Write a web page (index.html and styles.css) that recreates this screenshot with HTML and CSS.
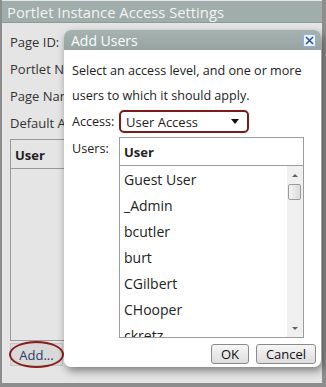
FILE: index.html
```html
<!DOCTYPE html>
<html>

<head>
    <title>Portlet Instance Access Settings</title>
    <link rel="stylesheet" href="styles.css">
</head>

<body>
    <div class="win">
        <div class="win-title">Portlet Instance Access Settings</div>
        <div class="win-body">
            <div class="field">Page ID:</div>
            <div class="field">Portlet Name:</div>
            <div class="field">Page Name:</div>
            <div class="field">Default Access:</div>

            <div class="grid">
                <div class="grid-head">User</div>
            </div>

            <div class="add-wrap">
                <button class="add-btn">Add...</button>
                <span class="ring"></span>
            </div>
        </div>

        <div class="dialog">
            <div class="dialog-title">
                <span>Add Users</span>
                <span class="close-btn">
                    <svg width="9" height="9" viewBox="0 0 9 9">
                        <path d="M1 1 L8 8 M8 1 L1 8" stroke="#2a4f9a" stroke-width="1.5" />
                    </svg>
                </span>
            </div>
            <div class="dialog-body">
                <p class="intro">Select an access level, and one or more users to which it should apply.</p>

                <div class="row">
                    <label class="row-label">Access:</label>
                    <div class="select">
                        <span>User Access</span>
                        <span class="caret"></span>
                    </div>
                </div>

                <div class="row users-row">
                    <label class="row-label">Users:</label>
                    <div class="listbox">
                        <div class="list-head">User</div>
                        <div class="list-wrap">
                            <div class="list-items">
                                <div class="item">Guest User</div>
                                <div class="item">_Admin</div>
                                <div class="item">bcutler</div>
                                <div class="item">burt</div>
                                <div class="item">CGilbert</div>
                                <div class="item">CHooper</div>
                                <div class="item">ckretz</div>
                            </div>
                            <div class="scrollbar">
                                <span class="arrow-up"></span>
                                <span class="thumb"></span>
                                <span class="arrow-down"></span>
                            </div>
                        </div>
                    </div>
                </div>

                <div class="buttons">
                    <button class="btn ok">OK</button>
                    <button class="btn">Cancel</button>
                </div>
            </div>
        </div>
    </div>
</body>

</html>
```

FILE: styles.css
```css
body {
    margin: 0;
    font-family: "Open Sans", "DejaVu Sans", sans-serif;
    font-size: 13px;
    color: #1a1a1a;
}

.win {
    position: relative;
    width: 326px;
    height: 387px;
    box-sizing: border-box;
    background-color: #e5e5e5;
    border-left: 2px solid #8d8d8d;
    border-right: 4px solid #8d8d8d;
    border-bottom: 4px solid #8d8d8d;
    display: flex;
    flex-direction: column;
}

.win-title {
    height: 21px;
    margin-top: 1px;
    padding-left: 5px;
    line-height: 22px;
    font-size: 14.8px;
    color: #f2f4f3;
    background-color: #a1adaa;
    border-bottom: 1px solid #8e9a97;
}

.win-body {
    padding: 6px 0 0 8px;
    color: #333;
}

.field {
    width: 54px;
    height: 27px;
    line-height: 27px;
    white-space: nowrap;
    overflow: hidden;
}

.grid {
    width: 80px;
    height: 202px;
    margin-top: 2px;
    margin-left: 0;
    border: 1px solid #9a9a9a;
    box-sizing: border-box;
}

.grid-head {
    height: 28px;
    line-height: 30px;
    padding-left: 4px;
    font-weight: bold;
    color: #222;
    border-bottom: 1px solid #9a9a9a;
}

.add-wrap {
    position: relative;
    margin-top: 2px;
    margin-left: 0;
    width: 53px;
    height: 23px;
}

.add-btn {
    width: 53px;
    height: 23px;
    padding: 0;
    font-family: inherit;
    font-size: 13px;
    color: #2a3a66;
    background-color: #d9d9d9;
    border: 1px solid #c6c6c6;
}

.ring {
    position: absolute;
    left: -1px;
    top: -2px;
    width: 51px;
    height: 23px;
    border: 2px solid #8b1c1c;
    border-radius: 50%;
}

.dialog {
    position: absolute;
    left: 62px;
    top: 30px;
    width: 257px;
    height: 337px;
    background-color: #fff;
    border-radius: 7px;
    box-shadow: 2px 4px 8px rgba(0, 0, 0, 0.45);
    overflow: hidden;
    display: flex;
    flex-direction: column;
}

.dialog-title {
    height: 20px;
    padding: 0 5px 0 7px;
    display: flex;
    align-items: center;
    justify-content: space-between;
    font-size: 14px;
    color: #fbfcfc;
    background: linear-gradient(#a6b2af, #97a4a1);
}

.close-btn {
    width: 13px;
    height: 13px;
    display: flex;
    align-items: center;
    justify-content: center;
    background-color: #eef3fb;
    border: 1px solid #8fb0e6;
    border-radius: 2px;
    box-sizing: border-box;
}

.dialog-body {
    padding: 0 0 0 8px;
    display: flex;
    flex-direction: column;
    font-size: 12.6px;
    color: #222;
}

.intro {
    margin: 8px 0 0;
    line-height: 25px;
    width: 240px;
}

.row {
    display: flex;
    margin-top: 2px;
}

.row-label {
    width: 47px;
    line-height: 23px;
}

.select {
    width: 130px;
    height: 23px;
    box-sizing: border-box;
    border: 2px solid #7d1b1b;
    border-radius: 5px;
    padding: 0 8px 0 5px;
    display: flex;
    align-items: center;
    justify-content: space-between;
    font-size: 13px;
}

.caret {
    width: 0;
    height: 0;
    border-left: 4px solid transparent;
    border-right: 4px solid transparent;
    border-top: 5px solid #111;
}

.users-row {
    margin-top: 4px;
}

.listbox {
    width: 185px;
    height: 201px;
    box-sizing: border-box;
    border: 1px solid #9c9c9c;
    display: flex;
    flex-direction: column;
    font-size: 14px;
}

.list-head {
    height: 27px;
    line-height: 29px;
    padding-left: 4px;
    font-size: 13px;
    font-weight: bold;
    border-bottom: 1px solid #9c9c9c;
}

.list-wrap {
    flex: 1;
    display: flex;
    overflow: hidden;
}

.list-items {
    flex: 1;
    padding-left: 4px;
    padding-top: 1px;
}

.item {
    height: 26px;
    line-height: 26px;
}

.scrollbar {
    width: 16px;
    position: relative;
    background-color: #f0f0f0;
}

.arrow-up,
.arrow-down {
    position: absolute;
    left: 5px;
    width: 0;
    height: 0;
    border-left: 3px solid transparent;
    border-right: 3px solid transparent;
}

.arrow-up {
    top: 8px;
    border-bottom: 3px solid #606060;
}

.arrow-down {
    bottom: 7px;
    border-top: 3px solid #606060;
}

.thumb {
    position: absolute;
    left: 1px;
    top: 18px;
    width: 13px;
    height: 16px;
    box-sizing: border-box;
    border: 1px solid #9a9a9a;
    border-radius: 2px;
    background: linear-gradient(to right, #f4f4f4, #dcdcdc);
}

.buttons {
    display: flex;
    justify-content: flex-end;
    gap: 7px;
    margin-top: 6px;
    padding-right: 5px;
}

.btn {
    height: 20px;
    padding: 0;
    font-family: inherit;
    font-size: 13px;
    color: #111;
    border: 1px solid #8a8a8a;
    border-radius: 3px;
    background: linear-gradient(#f6f6f6, #dddddd);
}

.ok {
    width: 38px;
}

.btn + .btn {
    width: 60px;
}
```
